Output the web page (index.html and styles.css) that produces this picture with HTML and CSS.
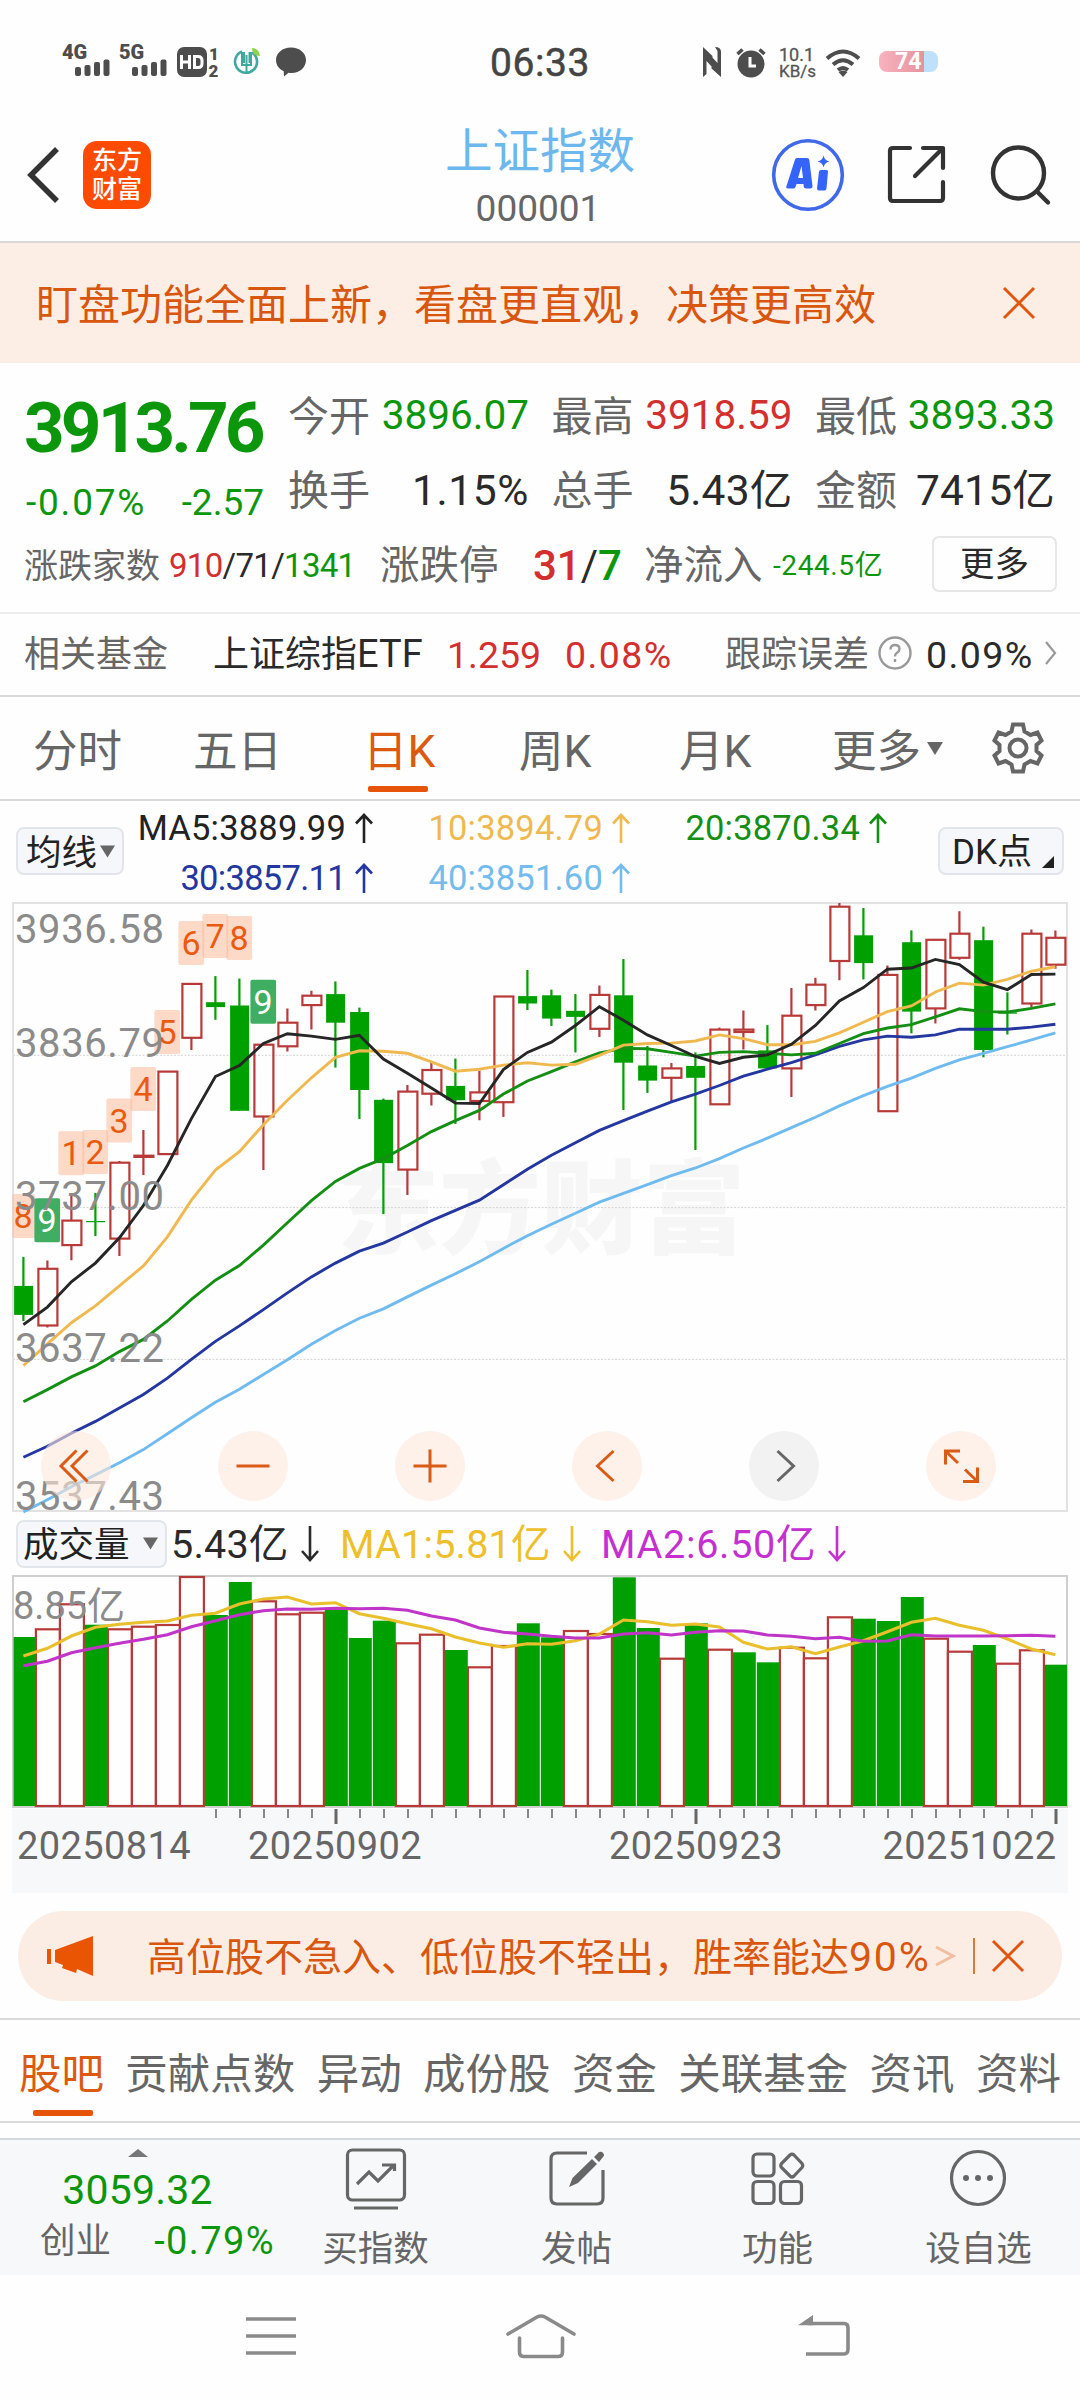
FILE: index.html
```html
<!DOCTYPE html>
<html lang="zh-CN">
<head>
<meta charset="utf-8">
<title>上证指数 000001</title>
<link rel="stylesheet" href="styles.css">
</head>
<body>
<div class="status">
  <svg class="st-signal" width="50" height="36" viewBox="0 0 50 36"><text x="0" y="19" class="net">4G</text><g class="dark"><rect x="13" y="27" width="6" height="9" rx="2"/><rect x="22.500" y="25" width="6" height="11" rx="2"/><rect x="32" y="22" width="6" height="14" rx="2"/><rect x="41.500" y="19.500" width="6" height="16.500" rx="2"/></g></svg>
  <svg class="st-signal" width="50" height="36" viewBox="0 0 50 36"><text x="0" y="19" class="net">5G</text><g class="dark"><rect x="13" y="27" width="6" height="9" rx="2"/><rect x="22.500" y="25" width="6" height="11" rx="2"/><rect x="32" y="22" width="6" height="14" rx="2"/><rect x="41.500" y="19.500" width="6" height="16.500" rx="2"/></g></svg>
  <svg class="st-hd" width="44" height="30" viewBox="0 0 44 30"><rect class="dark" width="30" height="30" rx="7"/><path d="M4.500 8v14M12.500 8v14M4.500 15h8M17.500 9.500h3.500q4 0 4 4v3q0 4-4 4h-3.500z" fill="none" stroke="#fff" stroke-width="3"/><text x="32" y="12.500" class="sim">1</text><text x="31.500" y="29.500" class="sim">2</text></svg>
  <svg class="st-app" width="29" height="30" viewBox="0 0 29 30"><path d="M9 4.500A11 11 0 1 0 19 5.500" fill="none" stroke="#3fa9a0" stroke-width="2.600"/><path d="M9 5v13h9V5M13.500 8v19M11 5v11M16.500 5v11" fill="none" stroke="#3fa9a0" stroke-width="2"/><path d="M19 1q7 0 8 8q-8 0-8-8z" fill="#8fd14f"/></svg>
  <svg class="st-msg" width="30" height="30" viewBox="0 0 30 30"><path class="dark" d="M15 0.500c8.500 0 15 5.500 15 12.500S24 26 15.500 26c-1 0-2-.1-3-.3L8 29.500l-.3-5.300C3 22 0 18 0 13 0 6 6.500.5 15 .5z"/></svg>
  <span class="clock">06:33</span>
  <svg class="st-nfc" width="18" height="30" viewBox="0 0 18 30"><path class="dark" d="M0 0L9.500 9V20.500L3.500 14V27L0 30zM12 0Q18 0 18 5V30L8.500 21.500V9.500L14.500 16V4z"/></svg>
  <svg class="st-alarm" width="30" height="30" viewBox="0 0 30 30"><circle class="dark" cx="15" cy="17" r="13.500"/><path d="M1.500 7l5-4.500M28.500 7l-5-4.500" stroke="#4d4d4d" stroke-width="3.500"/><path d="M14 10v9h6" fill="none" stroke="#fff" stroke-width="3"/></svg>
  <span class="speed"><span class="num">10.1</span><span>KB/s</span></span>
  <svg class="st-wifi" width="36" height="28" viewBox="0 0 36 28"><path d="M2 9.500q16-14 32 0M8 15.500q10-8.500 20 0M13 21q5-4 10 0" fill="none" stroke="#4d4d4d" stroke-width="4"/><path class="dark" d="M13.500 23q4.500-3 9 0L18 28z"/></svg>
  <span class="battery">74</span>
</div>

<header class="header">
  <svg class="back" width="34" height="56" viewBox="0 0 34 56"><path d="M31 2L5 28L31 54" fill="none" stroke="#333" stroke-width="5.500"/></svg>
  <div class="logo"><span>东方</span><span>财富</span></div>
  <div class="title"><span class="name">上证指数</span><span class="code">000001</span></div>
  <svg class="ai" width="72" height="72" viewBox="0 0 72 72"><circle cx="36" cy="36" r="34.300" fill="none" stroke="#3f69e8" stroke-width="3.600"/><path fill="#3564fb" fill-rule="evenodd" d="M25 19H35Q37 19 37.300 21L40.500 47Q40.500 49.500 38 49.500H34Q32 49.500 31.700 47.500L31.500 45H24.500L23.500 48Q23 49.500 21 49.500H16Q13.500 49.500 14.500 47L23 20.500Q23.500 19 25 19ZM29.500 27L26 39H31Z"/><path fill="#3564fb" d="M49 31H54.500Q56 31 56 32.500L54.500 49.500Q54.300 51.500 52.500 51.500H47Q45 51.500 45 49.500L47 32.500Q47.200 31 49 31ZM51.500 16.500Q52.500 21.500 57.500 22.500Q52.500 23.500 51.500 28.500Q50.500 23.500 45.500 22.500Q50.500 21.500 51.500 16.500Z"/></svg>
  <svg class="share" width="60" height="60" viewBox="0 0 60 60"><path d="M23 3H6Q3 3 3 6V53Q3 56 6 56H53Q56 56 56 53V37M36 3H56V23M55 4L28 31" fill="none" stroke="#333" stroke-width="4.200" stroke-linecap="round" stroke-linejoin="round"/></svg>
  <svg class="search" width="62" height="62" viewBox="0 0 62 62"><circle cx="28.500" cy="29" r="25.500" fill="none" stroke="#333" stroke-width="4.400"/><path d="M47 47.500L58 58.500" stroke="#333" stroke-width="4.400" stroke-linecap="round"/></svg>
</header>

<div class="notice"><span>盯盘功能全面上新，看盘更直观，决策更高效</span><svg width="32" height="32" viewBox="0 0 32 32"><path d="M1 1L31 31M31 1L1 31" stroke="#e0560e" stroke-width="3"/></svg></div>

<section class="quote">
  <div class="quote-top">
    <div class="price down"><b>3913.76</b><div class="chg"><span class="pct">-0.07%</span><span>-2.57</span></div></div>
    <div class="grid">
      <div><i>今开</i><span class="down">3896.07</span></div>
      <div><i>最高</i><span class="up">3918.59</span></div>
      <div><i>最低</i><span class="down">3893.33</span></div>
      <div class="big"><i>换手</i><span class="pct">1.15%</span></div>
      <div class="big"><i>总手</i><span>5.43亿</span></div>
      <div class="big"><i>金额</i><span>7415亿</span></div>
    </div>
  </div>
  <div class="breadth">
    <i class="s">涨跌家数</i><span class="adv"><em class="up">910</em>/71/<em class="down">1341</em></span>
    <i>涨跌停</i><span class="lim"><em class="up">31</em>/<em class="down">7</em></span>
    <i>净流入</i><span class="flow down">-244.5亿</span>
    <button class="more">更多</button>
  </div>
</section>

<div class="fund">
  <i>相关基金</i><span class="etf">上证综指<em>ETF</em></span><span class="up">1.259</span><span class="up pct">0.08%</span><i>跟踪误差</i>
  <svg width="34" height="34" viewBox="0 0 34 34"><circle cx="16" cy="17" r="15.500" fill="none" stroke="#999" stroke-width="2.400"/><path d="M11.500 13.500q0-4.500 4.500-4.500t4.500 4q0 2.300-2.500 3.800-2 1.200-2 3.700M16 23v3" fill="none" stroke="#999" stroke-width="2.400"/></svg>
  <span class="pct">0.09%</span>
  <svg class="chev" width="12" height="24" viewBox="0 0 12 24"><path d="M1 1L10 12L1 23" fill="none" stroke="#999" stroke-width="2.200"/></svg>
</div>

<nav class="periods">
  <span>分时</span><span>五日</span><span class="on">日K</span><span>周K</span><span>月K</span><span>更多</span>
  <svg class="tri" width="16" height="13" viewBox="0 0 16 13"><path d="M0 0h16L8 13z" fill="#666"/></svg>
  <svg class="gear" width="52" height="52" viewBox="0 0 52 52"><g fill="none" stroke="#666" stroke-width="4"><path d="M21 2.500H31L32.500 9.500L38.500 13L45.500 10.500L49.500 18.500L44.500 23V29L49.500 33.500L45.500 41.500L38.500 39L32.500 42.500L31 49.500H21L19.500 42.500L13.500 39L6.500 41.500L2.500 33.500L7.500 29V23L2.500 18.500L6.500 10.500L13.500 13L19.500 9.500Z"/><circle cx="26" cy="26" r="8.500"/></g></svg>
</nav>

<div class="ma-row">
  <button class="chip"><span>均线</span><svg width="15" height="13" viewBox="0 0 16 13"><path d="M0 0h16L8 13z" fill="#666"/></svg></button>
  <div class="ma">
    <span class="m5">MA5:3889.99<svg class="arr" viewBox="0 0 18 30"><path d="M9 30V2M1 10.500L9 2L17 10.500"/></svg></span>
    <span class="m10">10:3894.79<svg class="arr" viewBox="0 0 18 30"><path d="M9 30V2M1 10.500L9 2L17 10.500"/></svg></span>
    <span class="m20">20:3870.34<svg class="arr" viewBox="0 0 18 30"><path d="M9 30V2M1 10.500L9 2L17 10.500"/></svg></span>
    <span class="m30">30:3857.11<svg class="arr" viewBox="0 0 18 30"><path d="M9 30V2M1 10.500L9 2L17 10.500"/></svg></span>
    <span class="m40">40:3851.60<svg class="arr" viewBox="0 0 18 30"><path d="M9 30V2M1 10.500L9 2L17 10.500"/></svg></span>
  </div>
  <button class="chip dk"><span>DK点</span><svg width="12" height="12" viewBox="0 0 12 12"><path d="M12 0v12H0z" fill="#222"/></svg></button>
</div>

<div class="chart">
  <svg id="kline" width="1080" height="611" viewBox="0 0 1080 611"></svg>
  <div class="controls">
    <span><svg viewBox="0 0 70 70"><path d="M35.500 19.500L20 35L35.500 50.500M46.500 19.500L31 35L46.500 50.500"/></svg></span>
    <span><svg viewBox="0 0 70 70"><path d="M18.500 35H51.500"/></svg></span>
    <span><svg viewBox="0 0 70 70"><path d="M18.500 35H51.500M35 18.500V51.500"/></svg></span>
    <span><svg viewBox="0 0 70 70"><path d="M41.500 20L25.500 35L41.500 50"/></svg></span>
    <span class="off"><svg viewBox="0 0 70 70"><path d="M28.500 20L44.500 35L28.500 50"/></svg></span>
    <span><svg viewBox="0 0 70 70"><path d="M19.500 33.500V20H34M20 20.500L32 32M51.500 36.500V50.500H37M51 50L39 38.500"/></svg></span>
  </div>
</div>

<div class="vol-row">
  <button class="chip vol"><span>成交量</span><svg width="15" height="13" viewBox="0 0 16 13"><path d="M0 0h16L8 13z" fill="#666"/></svg></button>
  <span class="v0">5.43亿<svg class="arr" viewBox="0 0 18 36"><path d="M9 0V34M1 25L9 34L17 25"/></svg></span>
  <span class="v1">MA1:5.81亿<svg class="arr" viewBox="0 0 18 36"><path d="M9 0V34M1 25L9 34L17 25"/></svg></span>
  <span class="v2">MA2:6.50亿<svg class="arr" viewBox="0 0 18 36"><path d="M9 0V34M1 25L9 34L17 25"/></svg></span>
</div>
<svg id="volume" width="1080" height="234" viewBox="0 0 1080 234"></svg>
<div class="axis">
  <svg id="ticks" width="1056" height="16" viewBox="12 0 1056 16"></svg>
  <div class="dates"><span>20250814</span><span>20250902</span><span>20250923</span><span>20251022</span></div>
</div>

<div class="promo">
  <svg width="46" height="40" viewBox="0 0 46 40"><path fill="#ea5504" d="M0 13h4v15H0zM8 14L46 0V40L30 33l-1 4-14-5 1-3-8-3z"/></svg>
  <p>高位股不急入、低位股不轻出，胜率能达<em>90%</em></p>
  <svg class="fade" width="20" height="22" viewBox="0 0 20 22"><path d="M1 2L18 11L1 20" fill="none" stroke="#f3bd9f" stroke-width="3"/></svg>
  <s></s>
  <svg width="32" height="32" viewBox="0 0 32 32"><path d="M1 1L31 31M31 1L1 31" stroke="#e0560e" stroke-width="3"/></svg>
</div>

<nav class="tabs"><span class="on">股吧</span><span>贡献点数</span><span>异动</span><span>成份股</span><span>资金</span><span>关联基金</span><span>资讯</span><span>资料</span></nav>

<footer class="bottom">
  <div class="idx">
    <svg width="20" height="8" viewBox="0 0 20 8"><path d="M0 8L10 0L20 8z" fill="#777"/></svg>
    <b class="down">3059.32</b>
    <div><span>创业</span><span class="down pc">-0.79%</span></div>
  </div>
  <div class="act"><svg width="64" height="64" viewBox="0 0 64 64"><g fill="none" stroke="#666" stroke-width="3.200"><rect x="3.500" y="3" width="57" height="50" rx="5"/><path d="M10 61H54M13 37L25 25L34 34L50 18M38 18H50.500V24"/></g></svg><span>买指数</span></div>
  <div class="act"><svg width="64" height="64" viewBox="0 0 64 64"><g fill="none" stroke="#666" stroke-width="3.200"><path d="M42 6H12Q6 6 6 12V51Q6 57 12 57H52Q58 57 58 51V23"/></g><path d="M24 40L27.500 31L47 12L52 17L33 36ZM49 10L54 5Q57 4 58 6Q60 8 58 10L54 15Z" fill="#666"/></svg><span>发帖</span></div>
  <div class="act"><svg width="64" height="64" viewBox="0 0 64 64"><g fill="none" stroke="#666" stroke-width="3.200"><rect x="7" y="7" width="21" height="22" rx="4"/><rect x="7" y="34.500" width="21" height="22" rx="4"/><rect x="34.500" y="34.500" width="21" height="22" rx="4"/><path d="M44 8Q46 6 48 8L56 16.500Q57.500 18.500 56 20.500L48 29Q46 31 44 29L35.500 20.500Q34 18.500 35.500 16.500Z"/></g></svg><span>功能</span></div>
  <div class="act"><svg width="64" height="64" viewBox="0 0 64 64"><circle cx="31" cy="31" r="26.500" fill="none" stroke="#666" stroke-width="3.200"/><g fill="#666"><circle cx="19" cy="31" r="3"/><circle cx="31" cy="31" r="3"/><circle cx="43" cy="31" r="3"/></g></svg><span>设自选</span></div>
</footer>

<div class="sysnav">
  <svg width="50" height="44" viewBox="0 0 50 44"><path d="M0 5H50M0 22H50M0 39H50" stroke="#8a8a8a" stroke-width="3.600"/></svg>
  <svg width="70" height="46" viewBox="0 0 70 46"><path d="M2 20L31 3Q35 1 39 3L68 20M13.500 24V38Q13.500 42.500 18 42.500H52Q56.500 42.500 56.500 38V24" fill="none" stroke="#8a8a8a" stroke-width="3.600" stroke-linecap="round"/></svg>
  <svg width="54" height="46" viewBox="0 0 54 46"><path d="M10 9.500H46Q50 9.500 50 14V35Q50 40 46 40H8" fill="none" stroke="#8a8a8a" stroke-width="3.600"/><path d="M0 11.300L15 1V11.300z" fill="#8a8a8a"/></svg>
</div>
<script src="chart.js"></script>
</body>
</html>
```

FILE: styles.css
```css
* { box-sizing: border-box; }
body { margin: 0; width: 1080px; height: 2400px; overflow: hidden; background: #fefefe; color: #2a2a2a; font-family: Roboto, "Noto Sans CJK SC", sans-serif; }
svg { display: block; flex: none; overflow: visible; }
i, em { font-style: normal; }
span, i, b, p { white-space: nowrap; }
button { font: inherit; color: inherit; padding: 0; margin: 0; }
.up { color: #d32f2f; }
.down { color: #0b960b; }
.dark { fill: #4d4d4d; }

.status { display: flex; align-items: flex-start; height: 108px; padding: 40px 0 0 62px; }
.st-signal { margin-right: 7px; }
.net { font-size: 20px; font-weight: 900; fill: #4d4d4d; }
.sim { font-size: 17px; font-weight: 900; fill: #4d4d4d; }
.st-hd { margin: 7px 0 0 1px; }
.st-app { margin: 7px 0 0 12px; }
.st-msg { margin: 7px 0 0 14px; }
.clock { width: 100px; margin: 1px 0 0 184px; font-size: 39px; line-height: 44px; font-weight: 400; color: #444; letter-spacing: .6px; -webkit-text-stroke: .5px #444; }
.st-nfc { margin: 7px 0 0 113px; }
.st-alarm { margin: 7px 0 0 15px; }
.speed { display: flex; flex-direction: column; width: 34px; margin: 6px 0 0 13px; font-size: 17px; line-height: 17px; color: #555; -webkit-text-stroke: .3px; }
.speed .num { font-size: 18px; }
.st-wifi { margin: 9px 0 0 12px; }
.battery { width: 59px; height: 21px; margin: 11px 0 0 18px; padding-left: 16px; border-radius: 8px; background: linear-gradient(90deg, #f8b3bf 0, #e6929c 45px, #bfe0fb 45px); color: #fff; font-size: 23px; font-weight: 700; line-height: 22px; }

.header { display: flex; align-items: center; height: 135px; border-bottom: 2px solid #d8d8d8; }
.back { margin-left: 26px; }
.logo { width: 68px; height: 68px; margin-left: 23px; padding-top: 5px; border-radius: 14px; background: #fd4b04; color: #fff; font-size: 25px; font-weight: 500; line-height: 29px; display: flex; flex-direction: column; align-items: center; }
.title { width: 240px; margin-left: 265px; padding-top: 9px; display: flex; flex-direction: column; align-items: center; }
.name { margin-left: 8px; font-size: 47.500px; line-height: 60px; color: #6cb8ee; }
.code { margin-left: 4px; font-size: 37px; line-height: 54px; color: #666; }
.ai { margin-left: 116px; }
.share { margin-left: 43px; }
.search { margin-left: 43px; }

.notice { display: flex; align-items: center; justify-content: space-between; height: 120px; padding: 0 45px 0 36px; background: #fceee5; color: #d9560f; font-size: 42px; line-height: 60px; }
.notice span { padding-top: 5px; }

.quote { height: 251px; padding-top: 15px; border-bottom: 2px solid #ededed; }
.quote-top { display: flex; height: 148px; }
.price { width: 289px; padding-left: 24px; }
.price b { display: block; font-size: 71px; line-height: 100px; font-weight: 700; letter-spacing: -3.900px; }
.chg { display: flex; justify-content: space-between; padding-right: 25px; font-size: 37px; line-height: 50px; letter-spacing: 0; }
.chg .pct { padding-left: 2px; letter-spacing: 1.800px; }
.grid { display: grid; grid-template-columns: 240px 240px 239px; grid-auto-rows: 74px; column-gap: 23.500px; font-size: 41px; line-height: 78px; }
.grid div { display: flex; justify-content: space-between; }
.grid i { margin-left: -1px; color: #666; }
.grid span { line-height: 75px; }
.grid .big span { font-size: 42.500px; line-height: 78px; letter-spacing: .2px; }
.grid .big .pct { letter-spacing: .6px; }
.grid .up, .grid .down { font-size: 40.500px; }
.breadth { display: grid; grid-template-columns: 145px 211px 129px 135px 129px 159px 125px; align-items: center; height: 76px; padding-left: 24px; font-size: 39.500px; line-height: 60px; }
.breadth i, .breadth span { color: #666; padding-top: 3px; }
.breadth .s { font-size: 34px; }
.breadth .adv { font-size: 33px; letter-spacing: -.7px; color: #2a2a2a; }
.breadth .lim { padding-left: 24px; font-size: 42px; color: #2a2a2a; }
.breadth .lim em { font-weight: 500; }
.breadth .lim .down { font-weight: 500; }
.breadth .flow { font-size: 28px; letter-spacing: .6px; color: #0b960b; }
.more { height: 56px; border: 2px solid #e6e6e6; border-radius: 7px; background: #fefefe; font-size: 34.500px; line-height: 50px; }

.fund { display: grid; grid-template-columns: 189px 234px 120px 158px 154px 49px 117px 12px; align-items: center; height: 83px; padding: 0 0 4px 24px; border-bottom: 2px solid #d8d8d8; font-size: 37.500px; line-height: 60px; }
.fund i, .fund span { padding-top: 4px; }
.fund i, .etf { font-size: 36px; }
.etf em { font-size: 38px; }
.fund i { color: #666; }
.fund .pct { letter-spacing: 1.400px; margin-left: -2px; }

.periods { display: grid; grid-template-columns: 160px 171px 155px 160px 153px 95px 65px 52px; align-items: center; height: 104px; padding: 0 0 0 33px; border-bottom: 2px solid #d8d8d8; font-size: 44.500px; line-height: 104px; color: #666; }
.periods span { padding-top: 8px; height: 102px; line-height: 94px; }
.on { color: #dc5a10; position: relative; }
.on::after { content: ""; position: absolute; left: 5px; bottom: 7px; width: 60px; height: 6px; border-radius: 2px; background: #e65409; }
.periods .on { margin-left: -1px; }

.ma-row { display: flex; height: 100px; padding: 2px 0 0 16px; }
.chip { display: flex; align-items: center; height: 48px; margin-top: 24px; padding-left: 8px; width: 108px; border: 2px solid #e2e5ea; border-radius: 8px; background: #f6f7fa; font-size: 35.500px; line-height: 44px; gap: 3px; color: #222; }
.chip span { padding-top: 3px; }
.ma { display: grid; grid-template-columns: 249px 257px 257px; grid-auto-rows: 50px; width: 814px; font-size: 34.500px; line-height: 50px; }
.ma span { display: flex; justify-content: flex-end; align-items: center; letter-spacing: .2px; }
.arr { width: 18px; height: 30px; margin-left: 9px; fill: none; stroke: currentColor; stroke-width: 2.600px; }
.m5 { color: #222; } .m10 { color: #f0b94f; } .m20 { color: #148f14; } .m30 { color: #2437a0; } .m40 { color: #74bbee; }
.ma .m30 { letter-spacing: -.7px; }
.dk { width: 126px; padding-left: 12px; gap: 10px; font-size: 35px; }
.dk svg { margin-top: 22px; }

.chart { position: relative; height: 611px; }
.controls { position: absolute; left: 41px; top: 530px; display: flex; gap: 107px; }
.controls span { width: 70px; height: 70px; border-radius: 50%; background: rgba(253, 232, 219, .6); }
.controls path { fill: none; stroke: #d95b16; stroke-width: 3px; }
.controls .off { background: #f2f2f2; }
.controls .off path { stroke: #666; }
.kl { font-size: 40px; fill: #8b8b8b; letter-spacing: .6px; }
.vl { font-size: 38px; fill: #8b8b8b; }
.bd { font-size: 34px; fill: #ea5a10; text-anchor: middle; }
.bd.w { fill: #fff; }
.wm { font-size: 102px; font-weight: 900; fill: #f6f6f7; }

.vol-row { display: flex; align-items: center; height: 63px; padding: 0 0 0 16px; font-size: 39.500px; line-height: 60px; }
.vol-row > span { display: flex; align-items: center; padding-top: 3px; letter-spacing: .2px; }
.vol-row .arr { height: 36px; margin: -2px 0 0 12px; }
.vol { width: 151px; margin-top: 0; padding-left: 5px; gap: 13px; font-size: 35.500px; }
.vol-row .v0 { width: 172px; padding-left: 4px; }
.vol-row .v1 { width: 261px; padding-left: 1px; color: #edc02b; }
.vol-row .v2 { padding-left: 1px; color: #c52fd0; letter-spacing: .7px; }

.axis { height: 84px; margin: 0 12px; background: #f7f8fa; }
.dates { display: grid; grid-template-columns: 231px 361px 273.500px 180px; padding-left: 5px; font-size: 38px; line-height: 42px; color: #666; letter-spacing: .4px; }

.promo { display: flex; align-items: center; height: 90px; margin: 18px 18px 17px; padding-left: 29px; border-radius: 45px; background: #fcede4; color: #d9560f; }
.promo p { width: 786px; margin: 0 0 0 54px; padding-top: 2px; font-size: 39px; line-height: 60px; }
.promo em { font-size: 41px; letter-spacing: 1.800px; }
.promo .fade { margin-left: 2px; }
.promo s { width: 2px; height: 36px; margin: 0 17px 0 18px; background: #d8793f; }

.tabs { display: flex; justify-content: space-between; height: 105px; padding: 0 19px; border-top: 2px solid #d8dadc; border-bottom: 2px solid #d8dadc; font-size: 42.500px; line-height: 109px; color: #666; }
.tabs span { height: 101px; }
.tabs .on::after { left: 14px; bottom: 5px; }

.bottom { display: flex; height: 137px; margin-top: 15px; border-top: 2px solid #d5d8db; background: #f6f8f9; color: #666; font-size: 35.500px; }
.idx { display: flex; flex-direction: column; align-items: center; width: 275px; padding: 9px 0 0 0; }
.idx b { margin-top: 9px; font-size: 41px; font-weight: 400; line-height: 48px; letter-spacing: .2px; }
.idx div { display: flex; justify-content: space-between; align-self: stretch; margin: 5px 0 0; padding-left: 40px; line-height: 44px; }
.pc { font-size: 38px; letter-spacing: 1.400px; }
.act { display: flex; flex-direction: column; align-items: center; width: 201px; padding-top: 7px; }
.act span { margin-top: 12px; line-height: 52px; }

.sysnav { display: flex; padding: 39px 0 0 246px; }
.sysnav svg:nth-child(2) { margin-left: 210px; }
.sysnav svg:nth-child(3) { margin-left: 222px; }
```

FILE: chart.js
```js
const RED = '#b83a38', GREEN = '#00a000';
const STEP = 24, X0 = 23.4;
const x = i => X0 + STEP * i;
const r = n => Math.round(n * 10) / 10;

// [up(1)/down(0), high, body top, body bottom, low] in chart levels
const candles = [
  [0,899,970,1041,1056],[1,908,928,1067,1072],[1,748,810,870,907],[0,742,811,814,848],[1,664,668,854,897],
  [1,588,651,654,698],[1,445,445,647,647],[1,230,230,362,392],[0,211,275,287,318],[0,217,283,541,541],
  [1,378,379,555,686],[1,290,325,383,396],[1,247,259,282,342],[0,224,255,325,435],[0,288,299,490,561],
  [0,511,514,669,794],[1,478,494,685,747],[1,422,441,499,528],[0,413,480,515,573],[1,443,496,517,564],
  [1,261,261,520,556],[0,196,260,278,294],[0,244,258,315,333],[0,255,296,311,398],[1,234,257,340,360],
  [0,169,258,423,539],[0,382,430,467,497],[1,424,437,460,518],[0,398,431,460,637],[1,337,342,525,525],
  [1,295,342,348,391],[0,331,393,437,437],[1,240,308,437,507],[1,215,232,282,295],[1,32,41,174,221],
  [0,44,111,179,219],[1,185,208,542,542],[0,99,128,298,351],[1,122,122,290,327],[1,52,107,166,171],
  [0,90,123,392,410],[0,251,300,303,354],[1,97,107,278,288],[1,99,117,183,193]
];
const averages = {
  '#6fbbf0': [1524,1494,1462,1433,1403,1371,1332,1293,1255,1223,1187,1151,1113,1079,1049,1026,997,968,940,911,878,847,819,792,765,743,722,700,681,658,632,608,582,557,529,504,481,461,437,416,400,384,367,350],
  '#2437a0': [1390,1363,1331,1302,1269,1236,1196,1150,1106,1068,1028,987,948,914,885,865,838,810,785,760,722,684,650,619,589,565,542,519,500,479,456,439,423,404,383,367,358,361,355,341,341,341,336,329],
  '#148f14': [1254,1224,1193,1166,1131,1101,1056,1003,956,920,870,815,761,714,682,658,626,592,565,540,500,468,445,421,399,388,389,398,407,398,396,400,404,400,376,352,338,330,311,291,298,299,290,279],
  '#f0b94f': [1165,1112,1060,1019,970,921,850,760,686,641,575,515,460,410,394,395,400,421,444,439,429,423,429,427,405,380,376,375,370,355,364,379,379,371,350,324,298,284,250,228,233,219,199,188],
  '#262626': [1065,1022,960,914,852,773,675,560,457,430,376,352,358,366,356,414,449,485,522,523,440,398,373,332,286,319,355,381,408,425,410,404,378,332,272,239,194,191,170,183,226,244,207,206]
};
const y = v => r(v / 2.45 - 11);
const line = (vals, f, color, w) =>
  `<polyline fill="none" stroke="${color}" stroke-width="${w}" points="${vals.map((v, i) => r(x(i)) + ',' + f(v)).join(' ')}"/>`;

let k = '<text class="wm" x="337" y="345">东方财富</text>';
[405, 778, 1150].forEach(v => { k += `<path d="M13 ${y(v)}H1067" stroke="#d4d4d4" stroke-width="1" stroke-dasharray="2 1.500"/>`; });
k += '<rect x="13" y="2" width="1054" height="608" fill="none" stroke="#e2e2e2" stroke-width="2"/>';
candles.forEach(([up, h, t, b, l], i) => {
  const c = up ? RED : GREEN, cx = r(x(i));
  if (up) {
    k += `<path d="M${cx} ${y(h)}V${y(t)}M${cx} ${y(b)}V${y(l)}" stroke="${c}" stroke-width="2.2"/>`;
    k += `<rect x="${r(cx - 9)}" y="${y(t)}" width="19" height="${Math.max(r(y(b) - y(t)), .2)}" fill="none" stroke="${c}" stroke-width="2.2"/>`;
  } else {
    k += `<path d="M${cx} ${y(h)}V${y(l)}" stroke="${c}" stroke-width="2.2"/>`;
    k += `<rect x="${r(cx - 9.3)}" y="${y(t)}" width="19" height="${r(y(b) - y(t))}" fill="${c}"/>`;
  }
});
for (const c in averages) k += line(averages[c], y, c, 2.9);
// countdown badges: [candle index, level of the top edge, label, turned]
[[0,745,8],[1,755,9,1],[2,591,1],[3,588,2],[4,511,3],[5,434,4],[6,294,5],[7,76,6],[8,59,7],[9,64,8],[10,220,9,1]].forEach(([i, t, n, w]) => {
  const left = Math.max(r(x(i) - 13), 12.5), right = x(i) + (i ? 12.7 : 11.7);
  k += `<rect x="${left}" y="${y(t)}" width="${r(right - left)}" height="44" rx="2" fill="${w ? '#3fae63' : '#fbb795'}" fill-opacity="${w ? 1 : .52}"/>`;
  k += `<text class="bd${w ? ' w' : ''}" x="${r(x(i) - .4)}" y="${y(t) + 34}">${n}</text>`;
});
[['3936.58', 42], ['3836.79', 156], ['3737.00', 309], ['3637.22', 461], ['3537.43', 608.5]].forEach(([s, ty]) => {
  k += `<text class="kl" x="15" y="${ty}">${s}</text>`;
});
document.getElementById('kline').innerHTML = k;

const volTop = [411,385,310,374,385,377,372,228,345,246,301,340,335,323,414,362,427,401,450,499,435,370,412,390,399,232,384,473,370,446,457,487,440,472,349,356,363,291,413,452,435,488,448,494];
const volDown = new Set([0,3,8,9,13,14,15,18,21,22,25,26,28,30,31,35,36,37,40,43]);
const volAvg = {
  '#e9bf2c': [468,445,408,382,373,367,363,346,340,312,297,291,312,308,341,355,371,386,411,429,442,431,433,422,402,360,365,376,372,381,427,447,440,461,441,422,395,367,355,376,391,417,447,464],
  '#c035c8': [497,484,458,443,430,418,404,380,362,344,332,327,328,325,326,325,331,348,360,384,397,402,409,414,414,402,398,405,397,392,393,405,409,416,412,424,423,404,408,408,408,407,406,409]
};
const vy = v => r(v / 3 - 75);
let v = '<rect x="13" y="1" width="1054" height="231" fill="none" stroke="#cfcfcf" stroke-width="2"/>';
volTop.forEach((t, i) => {
  const cx = x(i);
  if (!volDown.has(i)) v += `<rect x="${r(cx - 11.5)}" y="${vy(t) + 1}" width="24" height="${r(230 - vy(t))}" fill="#fefefe" stroke="${RED}" stroke-width="2.2"/>`;
});
volTop.forEach((t, i) => {
  const left = Math.max(x(i) - 10.6, 13.6), right = Math.min(x(i) + 12.4, 1067);
  if (volDown.has(i)) v += `<rect x="${r(left)}" y="${vy(t)}" width="${r(right - left)}" height="${r(231 - vy(t))}" fill="${GREEN}"/>`;
});
for (const c in volAvg) v += line(volAvg[c], vy, c, 3.1);
v += '<text class="vl" x="13" y="44">8.85亿</text>';
document.getElementById('volume').innerHTML = v;

let tk = '';
for (let i = 8; i < 44; i++) {
  const major = (i - 13) % 15 === 0;
  tk += `<path d="M${x(i) + .6} 0V${major ? 15 : 9}" stroke="${major ? '#666' : '#888'}" stroke-width="${major ? 3 : 2}"/>`;
}
document.getElementById('ticks').innerHTML = tk;
```
